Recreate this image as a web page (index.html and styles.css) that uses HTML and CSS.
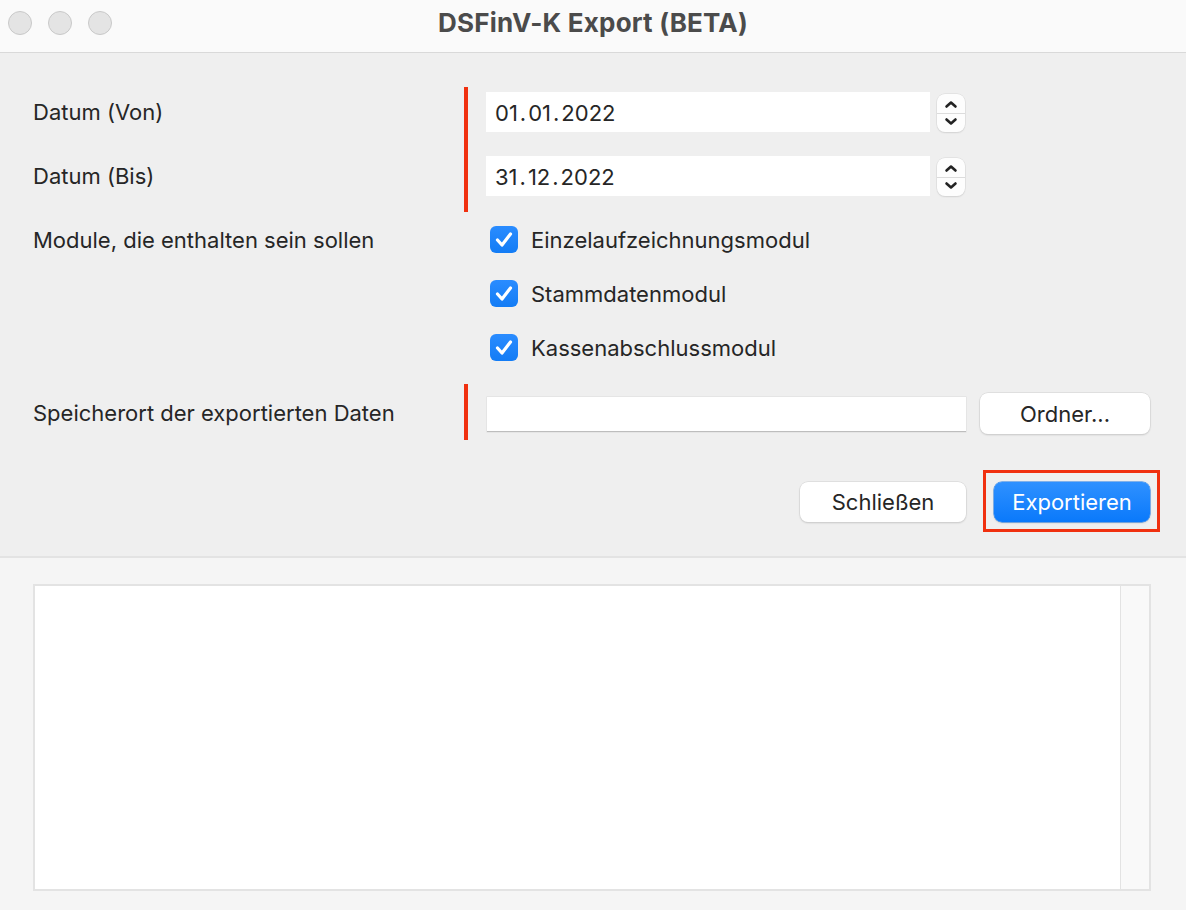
FILE: index.html
```html
<!DOCTYPE html>
<html lang="de">
<head>
<meta charset="utf-8">
<title>DSFinV-K Export (BETA)</title>
<link rel="stylesheet" href="styles.css">
</head>
<body>
<div class="window">
  <header class="titlebar">
    <div class="lights">
      <span class="light"></span><span class="light"></span><span class="light"></span>
    </div>
    <h1 class="title">DSFinV-K Export (BETA)</h1>
  </header>

  <section class="form">
    <div class="grid dates">
      <div class="label r1">Datum (Von)</div>
      <div class="marker span2"></div>
      <div class="field r1">
        <div class="date-input">01<span class="sep">.</span>01<span class="sep">.</span>2022</div>
        <div class="stepper">
          <svg viewBox="0 0 28 38" width="28" height="38"><path d="M9.5 12.5 L14 8.5 L18.5 12.5" /><path d="M9.5 25.5 L14 29.5 L18.5 25.5" /></svg>
        </div>
      </div>
      <div class="label r2">Datum (Bis)</div>
      <div class="field r2">
        <div class="date-input">31<span class="sep">.</span>12<span class="sep">.</span>2022</div>
        <div class="stepper">
          <svg viewBox="0 0 28 38" width="28" height="38"><path d="M9.5 12.5 L14 8.5 L18.5 12.5" /><path d="M9.5 25.5 L14 29.5 L18.5 25.5" /></svg>
        </div>
      </div>
    </div>

    <div class="grid modules">
      <div class="label">Module, die enthalten sein sollen</div>
      <div class="marker-space"></div>
      <div class="checks">
        <label class="check"><span class="box"><svg viewBox="0 0 28 27" width="28" height="27"><path d="M7.5 14 L12 19 L20.5 8" /></svg></span>Einzelaufzeichnungsmodul</label>
        <label class="check"><span class="box"><svg viewBox="0 0 28 27" width="28" height="27"><path d="M7.5 14 L12 19 L20.5 8" /></svg></span>Stammdatenmodul</label>
        <label class="check"><span class="box"><svg viewBox="0 0 28 27" width="28" height="27"><path d="M7.5 14 L12 19 L20.5 8" /></svg></span>Kassenabschlussmodul</label>
      </div>
    </div>

    <div class="grid path">
      <div class="label">Speicherort der exportierten Daten</div>
      <div class="marker"></div>
      <div class="field path-field">
        <div class="path-input"></div>
        <button class="btn">Ordner...</button>
      </div>
    </div>

    <div class="actions">
      <button class="btn btn-close">Schließen</button>
      <button class="btn btn-primary highlighted">Exportieren</button>
    </div>
  </section>

  <section class="log">
    <div class="log-box">
      <div class="log-text"></div>
      <div class="scroll-track"></div>
    </div>
  </section>
</div>
</body>
</html>
```

FILE: styles.css
```css
* { box-sizing: border-box; }

html, body {
  margin: 0;
  padding: 0;
}

body {
  font-family: "Inter", "Noto Sans", sans-serif;
  color: #262626;
  background: #f5f5f5;
}

.window {
  width: 1186px;
  height: 910px;
  display: flex;
  flex-direction: column;
  overflow: hidden;
}

/* Title bar */
.titlebar {
  height: 53px;
  flex: none;
  background: #fafafa;
  border-bottom: 1px solid #d9d9d9;
  display: flex;
  align-items: center;
  position: relative;
}

.lights {
  display: flex;
  gap: 16px;
  padding-left: 8px;
  margin-top: -6px;
}

.light {
  width: 24px;
  height: 24px;
  border-radius: 50%;
  background: #e4e4e4;
  border: 1px solid #c9c9c9;
}

.title {
  position: absolute;
  left: 0;
  right: 0;
  top: 7px;
  margin: 0;
  text-align: center;
  font-size: 26px;
  font-weight: 700;
  color: #4b4b4b;
  letter-spacing: 0.2px;
}

/* Form panel */
.form {
  flex: none;
  height: 505px;
  background: #efefef;
  border-bottom: 2px solid #e3e3e3;
  padding: 39px 36px 0 33px;
}

.grid {
  display: grid;
  grid-template-columns: 431px 4px 1fr;
  column-gap: 0;
  align-items: center;
}

.label {
  font-size: 22px;
  color: #262626;
  white-space: nowrap;
}

.marker {
  width: 4px;
  background: #f0300f;
  align-self: stretch;
}

.dates {
  grid-template-rows: 40px 40px;
  row-gap: 24px;
}

.dates .r1 { grid-row: 1; }
.dates .r2 { grid-row: 2; }
.dates .label.r1, .dates .label.r2 { grid-column: 1; }
.dates .field { grid-column: 3; }

.marker.span2 {
  grid-column: 2;
  grid-row: 1 / span 2;
  margin-top: -5px;
  margin-bottom: -16px;
}

.field {
  display: flex;
  align-items: center;
  margin-left: 18px;
}

.date-input {
  width: 444px;
  height: 40px;
  background: #fff;
  font-size: 22px;
  color: #262626;
  padding-left: 9px;
  display: flex;
  align-items: center;
  padding-top: 2px;
}

.sep {
  padding: 0 2px;
}

.stepper {
  width: 28px;
  height: 38px;
  margin-left: 7px;
  margin-top: 2px;
  border-radius: 8px;
  background: #fdfdfd;
  box-shadow: 0 0 0 0.5px #d8d8d8, 0 1px 1.5px rgba(0, 0, 0, 0.12);
  position: relative;
}

.stepper::before {
  content: "";
  position: absolute;
  left: 0;
  right: 0;
  top: 18.5px;
  height: 1px;
  background: #dcdcdc;
}

.stepper svg {
  display: block;
  fill: none;
  stroke: #222;
  stroke-width: 2.6;
  stroke-linecap: round;
  stroke-linejoin: round;
}

/* Modules */
.modules {
  margin-top: 30px;
  align-items: start;
}

.modules .label {
  margin-top: 1px;
}

.checks {
  grid-column: 3;
  display: flex;
  flex-direction: column;
  gap: 27px;
  padding-left: 4px;
  margin-left: 18px;
}

.check {
  display: flex;
  align-items: center;
  height: 27px;
  font-size: 22px;
  color: #262626;
  gap: 13px;
}

.box {
  width: 28px;
  height: 27px;
  border-radius: 6px;
  background: linear-gradient(#2a8cff, #137cf5);
  flex: none;
}

.box svg {
  display: block;
  fill: none;
  stroke: #fff;
  stroke-width: 3.2;
  stroke-linecap: round;
  stroke-linejoin: round;
}

/* Path */
.path {
  margin-top: 23px;
  height: 56px;
}

.path .label {
  margin-top: 2px;
}

.path-field {
  margin-left: 19px;
  margin-top: 5px;
}

.path-input {
  width: 479px;
  height: 35px;
  background: #fff;
  border-bottom: 1.5px solid #bdbdbd;
  box-shadow: 0 0 0 0.5px #dcdcdc;
}

.btn {
  font-family: inherit;
  font-size: 22px;
  color: #262626;
  background: #fff;
  border: none;
  border-radius: 8px;
  box-shadow: 0 0 0 0.5px #d2d2d2, 0 1px 2px rgba(0, 0, 0, 0.18);
  height: 41px;
  padding: 0;
  cursor: default;
}

.path-field .btn {
  width: 170px;
  margin-left: 14px;
  margin-top: -2px;
}

/* Actions */
.actions {
  display: flex;
  justify-content: flex-end;
  gap: 28px;
  margin-top: 42px;
}

.btn-close {
  width: 166px;
  height: 40px;
}

.btn-primary {
  width: 156px;
  height: 40px;
  color: #fff;
  background: linear-gradient(#2f91ff, #0a79fb);
  box-shadow: 0 0 0 0.5px #1676e6, 0 1px 2px rgba(0, 0, 0, 0.18);
  position: relative;
}

.highlighted::after {
  content: "";
  position: absolute;
  left: -11px;
  right: -10px;
  top: -12px;
  bottom: -10px;
  border: 3px solid #f0300f;
}

/* Log panel */
.log {
  flex: 1;
  background: #f5f5f5;
  padding: 26px 35px 19px 33px;
}

.log-box {
  height: 307px;
  border: 2px solid #e3e3e3;
  display: flex;
  background: #fff;
}

.log-text {
  flex: 1;
  background: #fff;
}

.scroll-track {
  width: 29px;
  background: #f9f9f9;
  border-left: 1.5px solid #e3e3e3;
}
```
